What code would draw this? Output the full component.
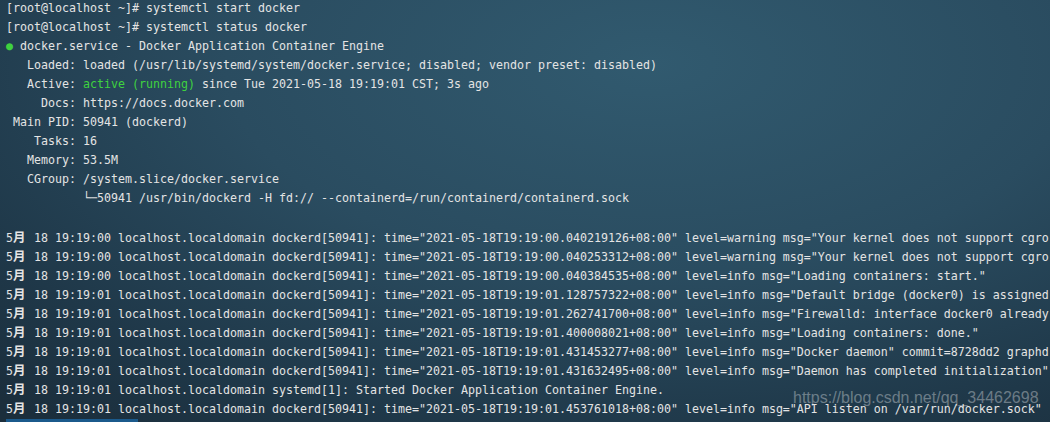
import React from 'react';

const header: React.ReactNode[] = [
  '[root@localhost ~]# systemctl start docker',
  '[root@localhost ~]# systemctl status docker',
  <>
    <span className="text-[#3fd23f]">●</span> docker.service - Docker Application Container Engine
  </>,
  '   Loaded: loaded (/usr/lib/systemd/system/docker.service; disabled; vendor preset: disabled)',
  <>
    {'   Active: '}
    <span className="text-[#3fd23f]">active (running)</span>
    {' since Tue 2021-05-18 19:19:01 CST; 3s ago'}
  </>,
  '     Docs: https://docs.docker.com',
  ' Main PID: 50941 (dockerd)',
  '    Tasks: 16',
  '   Memory: 53.5M',
  '   CGroup: /system.slice/docker.service',
  '           └─50941 /usr/bin/dockerd -H fd:// --containerd=/run/containerd/containerd.sock',
  '',
];

// only the part that fits in the window
const logs = [
  ['19:19:00', 'dockerd[50941]: time="2021-05-18T19:19:00.040219126+08:00" level=warning msg="Your kernel does not support cgro'],
  ['19:19:00', 'dockerd[50941]: time="2021-05-18T19:19:00.040253312+08:00" level=warning msg="Your kernel does not support cgro'],
  ['19:19:00', 'dockerd[50941]: time="2021-05-18T19:19:00.040384535+08:00" level=info msg="Loading containers: start."'],
  ['19:19:01', 'dockerd[50941]: time="2021-05-18T19:19:01.128757322+08:00" level=info msg="Default bridge (docker0) is assigned'],
  ['19:19:01', 'dockerd[50941]: time="2021-05-18T19:19:01.262741700+08:00" level=info msg="Firewalld: interface docker0 already'],
  ['19:19:01', 'dockerd[50941]: time="2021-05-18T19:19:01.400008021+08:00" level=info msg="Loading containers: done."'],
  ['19:19:01', 'dockerd[50941]: time="2021-05-18T19:19:01.431453277+08:00" level=info msg="Docker daemon" commit=8728dd2 graphd'],
  ['19:19:01', 'dockerd[50941]: time="2021-05-18T19:19:01.431632495+08:00" level=info msg="Daemon has completed initialization"'],
  ['19:19:01', 'systemd[1]: Started Docker Application Container Engine.'],
  ['19:19:01', 'dockerd[50941]: time="2021-05-18T19:19:01.453761018+08:00" level=info msg="API listen on /var/run/docker.sock"'],
];

export default function App() {
  return (
    <div className="relative w-[1050px] h-[422px] overflow-hidden bg-[radial-gradient(ellipse_90%_110%_at_62%_15%,#315a6f_0%,#2a4c60_45%,#1f3849_80%,#1b2e3c_100%)] font-['DejaVu_Sans_Mono',monospace] text-[11.63px] leading-[19.05px] text-[#e4e4e4]">
      <div className="pl-[6px] -mt-[1.5px] whitespace-pre">
        {header.map((l, i) => (
          <div key={i} className="h-[19.05px]">{l}</div>
        ))}
        {logs.map(([t, rest], i) => (
          <div key={'l' + i} className="h-[19.05px]">
            5<span className="inline-block w-[14px] font-['Noto_Sans_CJK_SC',sans-serif] text-[12.5px] font-bold">月</span>
            {` 18 ${t} localhost.localdomain ${rest}`}
          </div>
        ))}
      </div>
      <div className="absolute left-[6px] bottom-0 w-[132px] h-[3px] bg-[#1b5a8c]" />
      <div className="absolute left-[793px] top-[386px] font-['Liberation_Sans',sans-serif] text-[16px] leading-[24px] text-white/35 whitespace-nowrap">
        https://blog.csdn.net/qq_34462698
      </div>
    </div>
  );
}
